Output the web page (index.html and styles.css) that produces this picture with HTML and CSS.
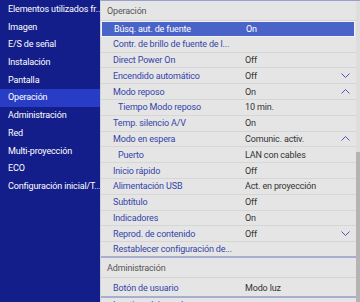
FILE: index.html
```html
<!DOCTYPE html>
<html lang="es">
<head>
    <meta charset="UTF-8">
    <meta name="viewport" content="width=device-width, initial-scale=1.0">
    <title>Menú - Operación</title>
    <link rel="stylesheet" href="styles.css">
</head>
<body>
    <div class="screen">
        <ul class="sidebar">
            <li>Elementos utilizados fr...</li>
            <li>Imagen</li>
            <li>E/S de señal</li>
            <li>Instalación</li>
            <li>Pantalla</li>
            <li class="active">Operación</li>
            <li>Administración</li>
            <li>Red</li>
            <li>Multi-proyección</li>
            <li>ECO</li>
            <li>Configuración inicial/T...</li>
        </ul>
        <div class="panel">
            <div class="list">
                <div class="section">Operación</div>
                <div class="row selected"><span class="label">Búsq. aut. de fuente</span><span class="value">On</span></div>
                <div class="row"><span class="label">Contr. de brillo de fuente de l...</span></div>
                <div class="row"><span class="label">Direct Power On</span><span class="value">Off</span></div>
                <div class="row"><span class="label">Encendido automático</span><span class="value">Off</span>
                    <svg class="chev" width="9" height="5" viewBox="0 0 9 5"><polyline points="0.5,0.5 4.5,4.5 8.5,0.5"/></svg></div>
                <div class="row"><span class="label">Modo reposo</span><span class="value">On</span>
                    <svg class="chev" width="9" height="5" viewBox="0 0 9 5"><polyline points="0.5,4.5 4.5,0.5 8.5,4.5"/></svg></div>
                <div class="row sub"><span class="label">Tiempo Modo reposo</span><span class="value">10 min.</span></div>
                <div class="row"><span class="label">Temp. silencio A/V</span><span class="value">On</span></div>
                <div class="row"><span class="label">Modo en espera</span><span class="value">Comunic. activ.</span>
                    <svg class="chev" width="9" height="5" viewBox="0 0 9 5"><polyline points="0.5,4.5 4.5,0.5 8.5,4.5"/></svg></div>
                <div class="row sub"><span class="label">Puerto</span><span class="value">LAN con cables</span></div>
                <div class="row"><span class="label">Inicio rápido</span><span class="value">Off</span></div>
                <div class="row"><span class="label">Alimentación USB</span><span class="value">Act. en proyección</span></div>
                <div class="row"><span class="label">Subtítulo</span><span class="value">Off</span></div>
                <div class="row"><span class="label">Indicadores</span><span class="value">On</span></div>
                <div class="row"><span class="label">Reprod. de contenido</span><span class="value">Off</span>
                    <svg class="chev" width="9" height="5" viewBox="0 0 9 5"><polyline points="0.5,0.5 4.5,4.5 8.5,0.5"/></svg></div>
                <div class="row last"><span class="label">Restablecer configuración de...</span></div>
                <div class="section">Administración</div>
                <div class="row tall last"><span class="label">Botón de usuario</span><span class="value">Modo luz</span></div>
                <div class="row"><span class="label">Inactivar del panel</span></div>
            </div>
            <div class="scrollbar"><div class="thumb"></div></div>
        </div>
    </div>
</body>
</html>
```

FILE: styles.css
```css
body {
    margin: 0;
    padding: 0;
    font-family: Roboto, "Noto Sans", sans-serif;
    font-size: 9px;
    letter-spacing: -0.15px;
    background-color: #141e8a;
}
.screen {
    display: flex;
    width: 360px;
    height: 302px;
    overflow: hidden;
}
.sidebar {
    list-style: none;
    margin: 0;
    padding: 1px 0 0;
    width: 100px;
    flex-shrink: 0;
    background-color: #141e8a;
    color: #ffffff;
}
.sidebar li {
    height: 17.7px;
    line-height: 17.7px;
    padding-left: 8px;
    white-space: nowrap;
    overflow: hidden;
}
.sidebar li.active {
    background-color: #283cc6;
}
.panel {
    flex: 1;
    display: flex;
    background-color: #e5e5e5;
    border-top: 1px solid #9aa0cc;
    border-left: 1px solid #d0d0d8;
}
.list {
    flex: 1;
    overflow: hidden;
}
.section {
    height: 20px;
    line-height: 20px;
    padding-left: 6px;
    color: #555555;
    border-bottom: 1px solid #d4d4d4;
    box-sizing: border-box;
}
.row {
    display: flex;
    align-items: center;
    height: 15.8px;
    padding-left: 12px;
    border-bottom: 1px solid #d6d6d6;
    box-sizing: border-box;
    color: #3444a8;
    white-space: nowrap;
}
.row.sub {
    padding-left: 17px;
}
.row.last {
    border-bottom: 2px solid #a9adcf;
}
.row.tall {
    height: 20px;
    padding-top: 2px;
}
.row.selected {
    background-color: #4a63c9;
    color: #ffffff;
    border: 1px solid #f2f2f2;
    margin-right: 1px;
}
.row .label {
    width: 132px;
    overflow: hidden;
}
.row.sub .label {
    width: 127px;
}
.value {
    color: #333333;
}
.selected .value {
    color: #ffffff;
}
.chev {
    margin-left: auto;
    margin-right: 6px;
    fill: none;
    stroke: #4a58b0;
    stroke-width: 1;
}
.scrollbar {
    width: 4px;
    flex-shrink: 0;
    display: flex;
    flex-direction: column;
    justify-content: flex-end;
    background-color: #dedede;
}
.thumb {
    height: 150px;
    background-color: #b4b4b4;
}
```
